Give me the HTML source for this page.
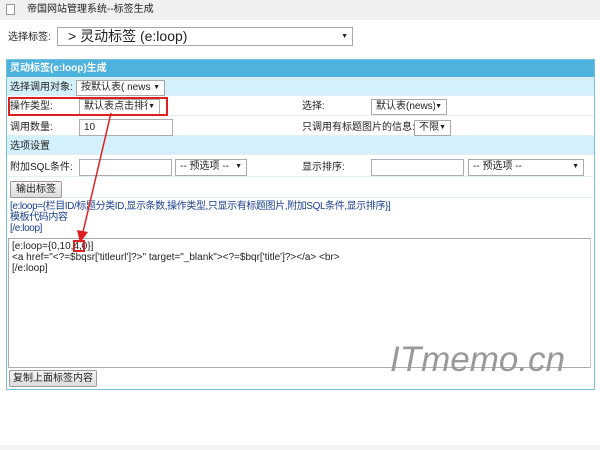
<!DOCTYPE html>
<html><head><meta charset="utf-8"><style>
*{margin:0;padding:0;box-sizing:border-box}
body{width:600px;height:450px;background:#fff;position:relative;overflow:hidden;font-family:"Liberation Sans","Noto Sans CJK SC",sans-serif;font-size:10px;line-height:12px;color:#222}
.a{position:absolute;white-space:nowrap}
.sel{position:absolute;border:1px solid #a9a9a9;background:#fff;height:16px;font-size:10px;line-height:14px;padding-left:4px;overflow:hidden;white-space:nowrap}
.sel:after{content:"▼";position:absolute;right:4px;top:0;font-size:7px;background:#fff}
.inp{position:absolute;border:1px solid #abadb3;background:#fff;height:17px;font-size:10px;line-height:15px;padding-left:4px}
.row{position:absolute;left:7px;width:587px;border-bottom:1px solid #e0eef5}
.btn{position:absolute;border:1px solid #9a9a9a;background:linear-gradient(#f6f6f6,#dcdcdc);font-size:10px;line-height:15px;padding:0 4px;border-radius:2px;white-space:nowrap}
.blue{color:#1a3f8f}
</style></head><body>
<div class="a" style="left:0;top:0;width:600px;height:20px;background:#f0f0f0"></div>
<div class="a" style="left:6px;top:4px;width:9px;height:11px;border:1px solid #999;background:#fff"></div>
<div class="a" style="left:27px;top:4px;font-size:10px">帝国网站管理系统--标签生成</div>
<div class="a" style="left:8px;top:32px">选择标签:</div>
<div class="sel" style="left:57px;top:27px;width:296px;height:19px;font-size:14px;line-height:17px;padding-left:10px">&gt; 灵动标签 (e:loop)</div>

<div class="a" style="left:6px;top:59px;width:589px;height:331px;border:1px solid #74c1e0"></div>
<div class="row" style="top:60px;height:18px;background:#4db2de;color:#fff;font-weight:bold;padding:3px 3px">灵动标签(e:loop)生成</div>
<div class="row" style="top:78px;height:18px;background:#d4f0fb"></div>
<div class="row" style="top:96px;height:20px"></div>
<div class="row" style="top:116px;height:20px"></div>
<div class="row" style="top:136px;height:19px;background:#d4f0fb"></div>
<div class="row" style="top:155px;height:22px"></div>
<div class="row" style="top:177px;height:21px"></div>

<div class="a" style="left:10px;top:82px">选择调用对象:</div>
<div class="sel" style="left:76px;top:80px;width:89px">按默认表( news )</div>
<div class="a" style="left:10px;top:101px">操作类型:</div>
<div class="sel" style="left:79px;top:99px;width:81px">默认表点击排行</div>
<div class="a" style="left:8px;top:97px;width:160px;height:19px;border:2px solid #e02020"></div>
<div class="a" style="left:302px;top:101px">选择:</div>
<div class="sel" style="left:371px;top:99px;width:76px">默认表(news)</div>
<div class="a" style="left:10px;top:122px">调用数量:</div>
<div class="inp" style="left:79px;top:119px;width:94px">10</div>
<div class="a" style="left:302px;top:122px">只调用有标题图片的信息:</div>
<div class="sel" style="left:414px;top:120px;width:37px">不限</div>
<div class="a" style="left:10px;top:141px">选项设置</div>
<div class="a" style="left:10px;top:162px">附加SQL条件:</div>
<div class="inp" style="left:79px;top:159px;width:93px"></div>
<div class="sel" style="left:175px;top:159px;width:72px;height:17px">-- 预选项 --</div>
<div class="a" style="left:302px;top:162px">显示排序:</div>
<div class="inp" style="left:371px;top:159px;width:93px"></div>
<div class="sel" style="left:468px;top:159px;width:116px;height:17px">-- 预选项 --</div>
<div class="btn" style="left:10px;top:181px;height:17px;line-height:15px;padding:0 5px">输出标签</div>
<div class="a blue" style="left:10px;top:201px;line-height:11px;font-size:10px;letter-spacing:-0.4px">[e:loop={栏目ID/标题分类ID,显示条数,操作类型,只显示有标题图片,附加SQL条件,显示排序}]<br>模板代码内容<br>[/e:loop]</div>
<div class="a" style="left:8px;top:238px;width:583px;height:130px;border:1px solid #abadb3;border-right-color:#ccc"></div>
<div class="a" style="left:12px;top:241px;line-height:11px">[e:loop={0,10,4,0}]<br>&lt;a href="&lt;?=$bqsr['titleurl']?&gt;" target="_blank"&gt;&lt;?=$bqr['title']?&gt;&lt;/a&gt; &lt;br&gt;<br>[/e:loop]</div>
<div class="a" style="left:73px;top:240px;width:12px;height:12px;border:2px solid #e02020"></div>
<div class="a" style="left:390px;top:340px;font-size:35px;line-height:40px;font-style:italic;color:#999;font-family:'Liberation Sans',sans-serif">ITmemo.cn</div>
<div class="btn" style="left:9px;top:370px;height:17px;line-height:15px;padding:0 3px">复制上面标签内容</div>
<svg class="a" style="left:0;top:0" width="600" height="450"><line x1="111" y1="113" x2="83" y2="232" stroke="#e02020" stroke-width="1.5"/><polygon points="80,243 77,230 88,232" fill="#e02020"/></svg>
<div class="a" style="left:0;top:445px;width:600px;height:5px;background:#f4f4f4"></div>
</body></html>
